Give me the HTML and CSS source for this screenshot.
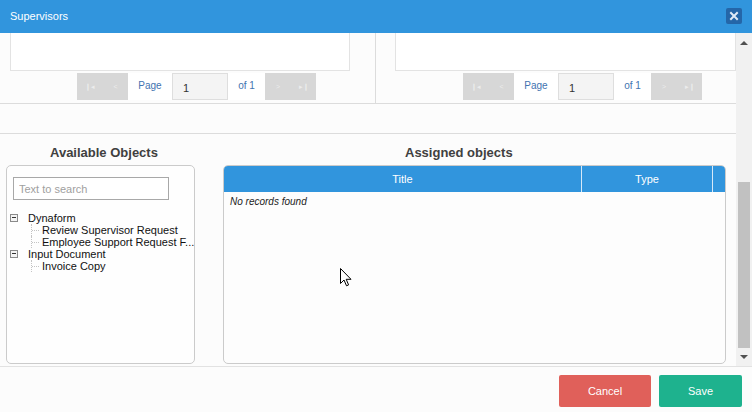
FILE: index.html
```html
<!DOCTYPE html>
<html>
<head>
<meta charset="utf-8">
<title>Supervisors</title>
<link rel="stylesheet" href="styles.css">
</head>
<body>
<div class="dialog">
  <header class="titlebar">
    <span class="title">Supervisors</span>
    <span class="close">
      <svg width="16" height="16" viewBox="0 0 16 16"><path d="M5 5 L11 11 M11 5 L5 11" stroke="#dfeaf6" stroke-width="2" stroke-linecap="square"/></svg>
    </span>
  </header>
  <div class="body">
    <div class="scrollarea">
      <section class="lists">
        <div class="half half-left">
          <div class="listbox"></div>
          <div class="pager">
            <span class="pbtn pbtn-first">&#x2759;&#x25C2;</span><span class="pbtn pbtn-prev">&lt;</span>
            <span class="pcell">Page</span>
            <span class="pinput">1</span>
            <span class="pcell pcell-of">of 1</span>
            <span class="pbtn pbtn-next">&gt;</span><span class="pbtn pbtn-last">&#x25B8;&#x2759;</span>
          </div>
        </div>
        <div class="half half-right">
          <div class="listbox"></div>
          <div class="pager">
            <span class="pbtn pbtn-first">&#x2759;&#x25C2;</span><span class="pbtn pbtn-prev">&lt;</span>
            <span class="pcell">Page</span>
            <span class="pinput">1</span>
            <span class="pcell pcell-of">of 1</span>
            <span class="pbtn pbtn-next">&gt;</span><span class="pbtn pbtn-last">&#x25B8;&#x2759;</span>
          </div>
        </div>
      </section>
      <div class="spacer"></div>
      <section class="objects">
        <div class="col-available">
          <h3 class="heading">Available Objects</h3>
          <div class="tree-panel">
            <input class="search" type="text" placeholder="Text to search">
            <div class="tree">
              <div class="node"><span class="toggle"></span><span class="label">Dynaform</span></div>
              <div class="children">
                <div class="leaf">Review Supervisor Request</div>
                <div class="leaf">Employee Support Request F...</div>
              </div>
              <div class="node"><span class="toggle"></span><span class="label">Input Document</span></div>
              <div class="children">
                <div class="leaf">Invoice Copy</div>
              </div>
            </div>
          </div>
        </div>
        <div class="col-assigned">
          <h3 class="heading heading-assigned">Assigned objects</h3>
          <div class="grid">
            <div class="grid-head">
              <span class="gcol gcol-title">Title</span>
              <span class="gcol gcol-type">Type</span>
            </div>
            <div class="grid-empty">No records found</div>
          </div>
        </div>
      </section>
    </div>
    <div class="vscroll">
      <span class="arrow arrow-up"></span>
      <span class="thumb"></span>
      <span class="arrow arrow-down"></span>
    </div>
  </div>
  <footer class="footer">
    <button class="btn btn-cancel">Cancel</button>
    <button class="btn btn-save">Save</button>
  </footer>
  <svg class="cursor" width="12" height="19" viewBox="0 0 12 19"><path d="M0.5 0.5 L0.5 15.5 L4 12 L6.5 17.8 L8.6 16.9 L6.2 11.3 L11 11.3 Z" fill="#fff" stroke="#000" stroke-width="1"/></svg>
</div>
</body>
</html>
```
FILE: styles.css
```css
* { box-sizing: border-box; }
html, body { margin: 0; padding: 0; }
body {
  font-family: "Liberation Sans", Arial, sans-serif;
  background: #fcfcfc;
  color: #222;
}
.dialog {
  position: relative;
  width: 752px;
  height: 412px;
  display: flex;
  flex-direction: column;
  background: #fcfcfc;
  overflow: hidden;
}
.titlebar {
  height: 33px;
  flex: none;
  background: #3195dd;
  display: flex;
  align-items: center;
  padding-left: 10px;
  padding-right: 10px;
}
.title {
  color: #fff;
  font-size: 11px;
  margin-top: -1px;
}
.close {
  margin-left: auto;
  width: 16px;
  height: 16px;
  background: #2466a8;
  border-radius: 2px;
  display: flex;
  margin-top: -2px;
}
.body {
  height: 333px;
  flex: none;
  display: flex;
}
.scrollarea {
  width: 736px;
  display: flex;
  flex-direction: column;
}
.lists {
  height: 71px;
  flex: none;
  display: flex;
  border-bottom: 1px solid #dcdcdc;
}
.half { display: flex; flex-direction: column; }
.half-left { width: 376px; border-right: 1px solid #dcdcdc; }
.half-right { flex: 1; }
.listbox {
  height: 38px;
  background: #fff;
  border: 1px solid #e3e3e3;
  border-top: none;
}
.half-left .listbox { margin-left: 10px; width: 340px; }
.half-right .listbox { margin-left: 19px; width: 341px; }
.pager {
  display: flex;
  height: 27px;
  margin-top: 2px;
  font-size: 10px;
}
.half-left .pager { margin-left: 77px; }
.half-right .pager { margin-left: 87px; }
.pbtn {
  background: #d7d7d7;
  color: #ececec;
  width: 26px;
  display: flex;
  align-items: center;
  justify-content: center;
  font-size: 7px;
}
.pbtn-prev, .pbtn-last { width: 25px; }
.pcell {
  width: 44px;
  background: #fff;
  color: #4373b0;
  display: flex;
  align-items: center;
  justify-content: center;
  padding-bottom: 3px;
}
.pcell-of { width: 37px; }
.pinput {
  width: 56px;
  background: #f4f4f4;
  border: 1px solid #dedede;
  color: #333;
  font-size: 11px;
  display: flex;
  align-items: center;
  padding-left: 10px;
  padding-top: 2px;
}
.spacer {
  height: 30px;
  flex: none;
  border-bottom: 1px solid #dcdcdc;
}
.objects {
  flex: 1;
  display: flex;
}
.col-available { margin-left: 6px; width: 189px; }
.col-assigned { margin-left: 28px; width: 503px; }
.heading {
  margin: 0 0 4px 0;
  padding-top: 11px;
  padding-left: 44px;
  height: 27px;
  line-height: 16px;
  font-size: 13px;
  font-weight: bold;
  color: #404040;
}
.heading-assigned { padding-left: 182px; }
.tree-panel {
  height: 199px;
  background: #fefefe;
  border: 1px solid #cbcbcb;
  border-radius: 5px;
  padding: 11px 0 0 6px;
}
.search {
  display: block;
  width: 156px;
  height: 23px;
  border: 1px solid #a8a8a8;
  background: #fff;
  padding: 0 5px;
  font-family: "Liberation Sans", Arial, sans-serif;
  font-size: 11px;
  outline: none;
  margin: 0;
}
.search::placeholder { color: #a0a0a0; }
.tree {
  margin-top: 12px;
  margin-left: -3px;
  font-size: 11px;
  color: #111;
}
.node {
  display: flex;
  align-items: center;
  height: 12px;
  line-height: 12px;
}
.toggle {
  position: relative;
  width: 8px;
  height: 8px;
  border: 1px solid #8a8a8a;
  background: #f4f4f4;
  margin-right: 10px;
}
.toggle::after {
  content: "";
  position: absolute;
  left: 1px;
  top: 2px;
  width: 4px;
  height: 1px;
  background: #333;
}
.children {
  margin-left: 21px;
}
.leaf {
  position: relative;
  height: 12px;
  line-height: 12px;
  padding-left: 10px;
  white-space: nowrap;
  border-left: 1px dotted #c4c4c4;
}
.leaf::before {
  content: "";
  position: absolute;
  left: 0;
  top: 6px;
  width: 7px;
  border-top: 1px dotted #c4c4c4;
}
.grid {
  height: 199px;
  background: #fdfdfd;
  border: 1px solid #cbcbcb;
  border-radius: 5px;
  overflow: hidden;
}
.grid-head {
  height: 26px;
  background: #3195dd;
  display: flex;
  color: #fff;
  font-size: 11px;
}
.gcol {
  display: flex;
  align-items: center;
  justify-content: center;
  border-right: 1px solid #d6e9f8;
}
.gcol-title { width: 358px; }
.gcol-type { width: 131px; }
.grid-empty {
  margin-top: 4px;
  padding-left: 6px;
  font-size: 10px;
  font-style: italic;
  color: #222;
  height: 12px;
  line-height: 12px;
}
.vscroll {
  width: 16px;
  background: #f1f1f1;
  display: flex;
  flex-direction: column;
  align-items: center;
}
.arrow {
  width: 0;
  height: 0;
  border-left: 4px solid transparent;
  border-right: 4px solid transparent;
}
.arrow-up {
  margin-top: 8px;
  border-bottom: 4px solid #505050;
}
.thumb {
  width: 12px;
  height: 166px;
  margin-top: 137px;
  background: #c1c1c1;
}
.arrow-down {
  margin-top: 7px;
  border-top: 4px solid #505050;
}
.footer {
  flex: 1;
  border-top: 1px solid #e2e2e2;
  background: #fcfcfc;
  display: flex;
  justify-content: flex-end;
  align-items: flex-start;
  padding-top: 8px;
  padding-right: 10px;
  gap: 8px;
}
.btn {
  height: 32px;
  border: none;
  border-radius: 2px;
  color: #fff;
  font-family: "Liberation Sans", Arial, sans-serif;
  font-size: 11px;
  padding: 0;
}
.btn-cancel { width: 92px; background: #e0605a; }
.btn-save { width: 83px; background: #1eb28e; }
.cursor {
  position: absolute;
  left: 340px;
  top: 268px;
}
```
